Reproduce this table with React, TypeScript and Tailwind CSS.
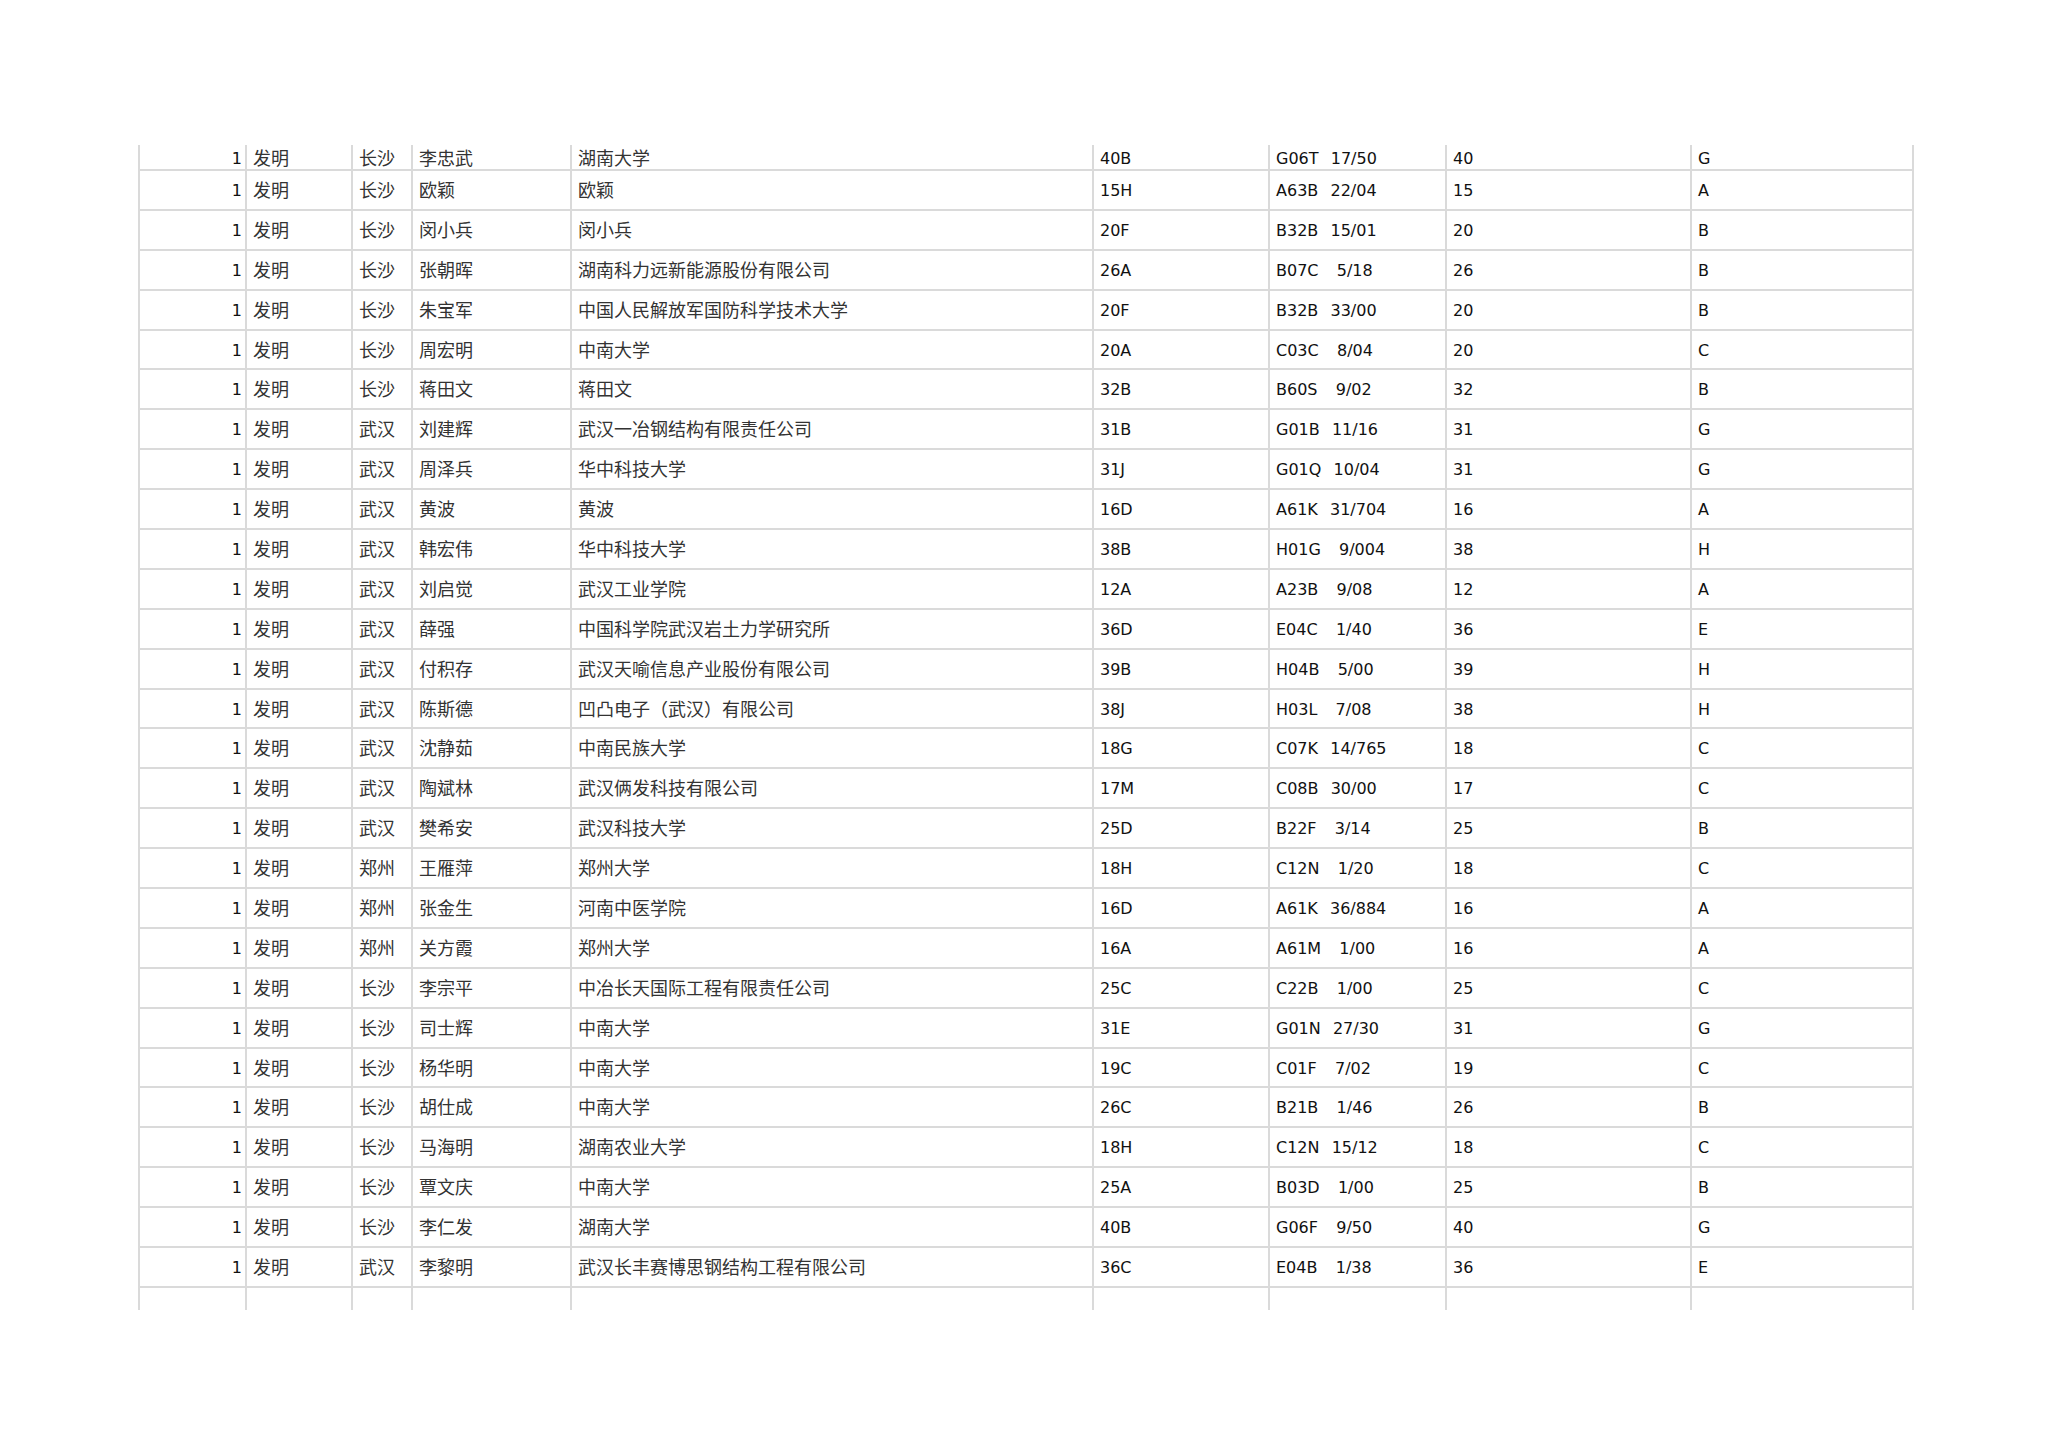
import React from "react";

type Rec = [string, string, string, string, string, string, string];

const data: Rec[] = [
  ["长沙", "李忠武", "湖南大学", "40B", "G06T  17/50", "40", "G"],
  ["长沙", "欧颖", "欧颖", "15H", "A63B  22/04", "15", "A"],
  ["长沙", "闵小兵", "闵小兵", "20F", "B32B  15/01", "20", "B"],
  ["长沙", "张朝晖", "湖南科力远新能源股份有限公司", "26A", "B07C   5/18", "26", "B"],
  ["长沙", "朱宝军", "中国人民解放军国防科学技术大学", "20F", "B32B  33/00", "20", "B"],
  ["长沙", "周宏明", "中南大学", "20A", "C03C   8/04", "20", "C"],
  ["长沙", "蒋田文", "蒋田文", "32B", "B60S   9/02", "32", "B"],
  ["武汉", "刘建辉", "武汉一冶钢结构有限责任公司", "31B", "G01B  11/16", "31", "G"],
  ["武汉", "周泽兵", "华中科技大学", "31J", "G01Q  10/04", "31", "G"],
  ["武汉", "黄波", "黄波", "16D", "A61K  31/704", "16", "A"],
  ["武汉", "韩宏伟", "华中科技大学", "38B", "H01G   9/004", "38", "H"],
  ["武汉", "刘启觉", "武汉工业学院", "12A", "A23B   9/08", "12", "A"],
  ["武汉", "薛强", "中国科学院武汉岩土力学研究所", "36D", "E04C   1/40", "36", "E"],
  ["武汉", "付积存", "武汉天喻信息产业股份有限公司", "39B", "H04B   5/00", "39", "H"],
  ["武汉", "陈斯德", "凹凸电子（武汉）有限公司", "38J", "H03L   7/08", "38", "H"],
  ["武汉", "沈静茹", "中南民族大学", "18G", "C07K  14/765", "18", "C"],
  ["武汉", "陶斌林", "武汉俩发科技有限公司", "17M", "C08B  30/00", "17", "C"],
  ["武汉", "樊希安", "武汉科技大学", "25D", "B22F   3/14", "25", "B"],
  ["郑州", "王雁萍", "郑州大学", "18H", "C12N   1/20", "18", "C"],
  ["郑州", "张金生", "河南中医学院", "16D", "A61K  36/884", "16", "A"],
  ["郑州", "关方霞", "郑州大学", "16A", "A61M   1/00", "16", "A"],
  ["长沙", "李宗平", "中冶长天国际工程有限责任公司", "25C", "C22B   1/00", "25", "C"],
  ["长沙", "司士辉", "中南大学", "31E", "G01N  27/30", "31", "G"],
  ["长沙", "杨华明", "中南大学", "19C", "C01F   7/02", "19", "C"],
  ["长沙", "胡仕成", "中南大学", "26C", "B21B   1/46", "26", "B"],
  ["长沙", "马海明", "湖南农业大学", "18H", "C12N  15/12", "18", "C"],
  ["长沙", "覃文庆", "中南大学", "25A", "B03D   1/00", "25", "B"],
  ["长沙", "李仁发", "湖南大学", "40B", "G06F   9/50", "40", "G"],
  ["武汉", "李黎明", "武汉长丰赛博思钢结构工程有限公司", "36C", "E04B   1/38", "36", "E"],
];

const grid =
  "grid grid-cols-[107px_106px_60px_159px_522px_176px_177px_245px_224px]";
const line = "border-l-2 border-[#dadada]";
const latin = "font-['DejaVu_Sans',sans-serif] text-[16px] leading-[20px] text-[#111]";
const cjk =
  "font-['Noto_Sans_CJK_SC','Noto_Sans_CJK_JP',sans-serif] text-[18px] leading-[20px] text-[#333]";

function Row({ r, first }: { r: Rec; first: boolean }) {
  const h = first ? "h-[26px]" : "h-[39.9px]";
  const pl = first ? "pt-[4px]" : "pt-[10px]";
  const pc = first ? "pt-[2px]" : "pt-[8px]";
  return (
    <div className={`${grid} ${h} border-b-2 border-[#dadada]`}>
      <div className={`${line} ${latin} ${pl} pr-[3px] text-right`}>1</div>
      <div className={`${line} ${cjk} ${pc} pl-[6px]`}>发明</div>
      <div className={`${line} ${cjk} ${pc} pl-[6px]`}>{r[0]}</div>
      <div className={`${line} ${cjk} ${pc} pl-[6px]`}>{r[1]}</div>
      <div className={`${line} ${cjk} ${pc} pl-[6px] whitespace-nowrap`}>{r[2]}</div>
      <div className={`${line} ${latin} ${pl} pl-[6px]`}>{r[3]}</div>
      <div className={`${line} ${latin} ${pl} pl-[6px] whitespace-pre [word-spacing:1px]`}>{r[4]}</div>
      <div className={`${line} ${latin} ${pl} pl-[6px]`}>{r[5]}</div>
      <div className={`${line} border-r-2 ${latin} ${pl} pl-[6px]`}>{r[6]}</div>
    </div>
  );
}

export default function App() {
  return (
    <div className="w-[2048px] h-[1447px] bg-white pl-[138px] pt-[145px] overflow-hidden">
      <div className="w-[1776px]">
        {data.map((r, i) => (
          <Row key={i} r={r} first={i === 0} />
        ))}
        <div className={`${grid} h-[22px]`}>
          {Array.from({ length: 9 }).map((_, i) => (
            <div key={i} className={`${line} ${i === 8 ? "border-r-2" : ""}`} />
          ))}
        </div>
      </div>
    </div>
  );
}
